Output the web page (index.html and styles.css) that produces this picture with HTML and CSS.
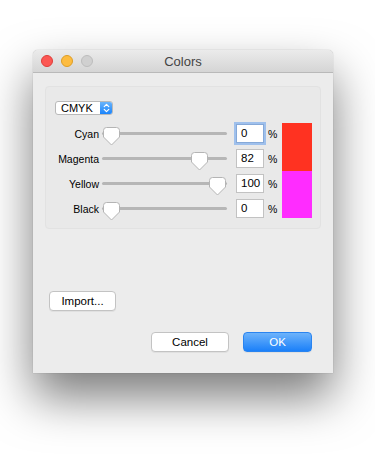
FILE: index.html
```html
<!DOCTYPE html>
<html>
<head>
<meta charset="utf-8">
<link rel="stylesheet" href="styles.css">
</head>
<body>
<div class="window">
  <div class="titlebar">
    <div class="lights">
      <span class="light red"></span>
      <span class="light yellow"></span>
      <span class="light gray"></span>
    </div>
    <div class="title">Colors</div>
  </div>
  <div class="content">
    <div class="group">
      <div class="popup">
        <span class="popup-label">CMYK</span>
        <span class="popup-arrows">
          <svg width="12" height="13" viewBox="0 0 12 13"><path d="M3.5 5 L6 2.5 L8.5 5 M3.5 8 L6 10.5 L8.5 8" fill="none" stroke="#fff" stroke-width="1.3" stroke-linecap="round" stroke-linejoin="round"/></svg>
        </span>
      </div>
      <div class="rows-wrap">
        <div class="rows">
          <div class="row">
            <span class="label">Cyan</span>
            <div class="slider"><div class="track"></div><span class="thumb" style="left:1px"><svg width="17" height="19" viewBox="0 0 17 19"><path d="M3.5 0.5 H13.5 Q16.5 0.5 16.5 3.5 V10 L8.5 18 L0.5 10 V3.5 Q0.5 0.5 3.5 0.5 Z" fill="#fff" stroke="#b4b4b4"/></svg></span></div>
            <span class="field focus">0</span>
            <span class="pct">%</span>
          </div>
          <div class="row">
            <span class="label">Magenta</span>
            <div class="slider"><div class="track"></div><span class="thumb" style="left:89px"><svg width="17" height="19" viewBox="0 0 17 19"><path d="M3.5 0.5 H13.5 Q16.5 0.5 16.5 3.5 V10 L8.5 18 L0.5 10 V3.5 Q0.5 0.5 3.5 0.5 Z" fill="#fff" stroke="#b4b4b4"/></svg></span></div>
            <span class="field">82</span>
            <span class="pct">%</span>
          </div>
          <div class="row">
            <span class="label">Yellow</span>
            <div class="slider"><div class="track"></div><span class="thumb" style="left:107px"><svg width="17" height="19" viewBox="0 0 17 19"><path d="M3.5 0.5 H13.5 Q16.5 0.5 16.5 3.5 V10 L8.5 18 L0.5 10 V3.5 Q0.5 0.5 3.5 0.5 Z" fill="#fff" stroke="#b4b4b4"/></svg></span></div>
            <span class="field">100</span>
            <span class="pct">%</span>
          </div>
          <div class="row">
            <span class="label">Black</span>
            <div class="slider"><div class="track"></div><span class="thumb" style="left:1px"><svg width="17" height="19" viewBox="0 0 17 19"><path d="M3.5 0.5 H13.5 Q16.5 0.5 16.5 3.5 V10 L8.5 18 L0.5 10 V3.5 Q0.5 0.5 3.5 0.5 Z" fill="#fff" stroke="#b4b4b4"/></svg></span></div>
            <span class="field">0</span>
            <span class="pct">%</span>
          </div>
        </div>
        <div class="swatch">
          <div class="sw-new"></div>
          <div class="sw-old"></div>
        </div>
      </div>
    </div>
    <button class="btn import">Import...</button>
    <div class="actions">
      <button class="btn">Cancel</button>
      <button class="btn primary">OK</button>
    </div>
  </div>
</div>
</body>
</html>
```

FILE: styles.css
```css
html, body {
  margin: 0;
  padding: 0;
  background: #ffffff;
}
body {
  width: 375px;
  height: 456px;
  overflow: hidden;
  font-family: "Liberation Sans", Arial, sans-serif;
  font-size: 10.5px;
  color: #000;
}
.window {
  margin: 50px 0 0 33px;
  width: 300px;
  height: 323px;
  background: #ececec;
  border-radius: 5px 5px 0 0;
  box-shadow: 0 24px 48px rgba(0,0,0,0.52), 0 0 1px rgba(0,0,0,0.4);
  display: flex;
  flex-direction: column;
}
.titlebar {
  height: 22px;
  border-bottom: 1px solid #b9b9b9;
  background: linear-gradient(#ebebeb, #d5d5d5);
  border-radius: 5px 5px 0 0;
  position: relative;
  display: flex;
  align-items: center;
  justify-content: center;
}
.lights {
  position: absolute;
  left: 8px;
  top: 5px;
  display: flex;
  gap: 8px;
}
.light {
  width: 12px;
  height: 12px;
  border-radius: 50%;
  box-sizing: border-box;
}
.red { background: #fc5753; border: 1px solid #df3d39; }
.yellow { background: #fdbc40; border: 1px solid #de9e25; }
.gray { background: #d0d0d0; border: 1px solid #bdbdbd; }
.title {
  font-size: 13px;
  color: #444;
  font-family: "Liberation Sans", Arial, sans-serif;
}
.content {
  flex: 1;
  padding: 13px 21px 0 12px;
  display: flex;
  flex-direction: column;
}
.group {
  height: 143px;
  box-sizing: border-box;
  border: 1px solid #e2e2e2;
  border-radius: 4px;
  background: #e9e9e9;
  margin-right: -9px;
  padding: 14px 0 0 9px;
}
.popup {
  width: 58px;
  height: 14px;
  box-sizing: border-box;
  border: 1px solid #b9b9b9;
  border-radius: 3px;
  background: #fff;
  display: flex;
  align-items: stretch;
  overflow: hidden;
}
.popup-label {
  flex: 1;
  padding-left: 5px;
  line-height: 12px;
  font-size: 11px;
}
.popup-arrows {
  width: 12px;
  background: linear-gradient(#6ab4fb, #1a84fb);
  display: flex;
  align-items: center;
  justify-content: center;
}
.popup-arrows svg { display: block; width: 11px; height: 12px; }
.rows-wrap {
  display: flex;
  margin-top: 6px;
}
.rows {
  display: flex;
  flex-direction: column;
}
.row {
  height: 25px;
  display: flex;
  align-items: center;
}
.label {
  width: 44px;
  text-align: right;
  margin-right: 3px;
}
.slider {
  width: 125px;
  height: 25px;
  position: relative;
}
.track {
  position: absolute;
  left: 0;
  right: 0;
  top: 11px;
  height: 3px;
  border-radius: 2px;
  background: #b6b6b6;
}
.thumb {
  position: absolute;
  top: 6px;
  width: 17px;
  height: 19px;
}
.thumb svg { display: block; }
.field {
  margin-left: 9px;
  width: 28px;
  height: 19px;
  box-sizing: border-box;
  border: 1px solid #c2c2c2;
  background: #fff;
  font-size: 11.5px;
  line-height: 17px;
  padding-left: 4px;
}
.field.focus {
  border-color: #86a9d8;
  box-shadow: 0 0 0 2px #9fc0ec;
}
.pct {
  margin-left: 4px;
  width: 10px;
  font-size: 10.5px;
}
.swatch {
  margin-left: 4px;
  margin-top: 2px;
  width: 30px;
  height: 95px;
  display: flex;
  flex-direction: column;
}
.sw-new { flex: 1; background: #ff3221; }
.sw-old { flex: 1; background: #ff2cff; }
.btn {
  font-family: "Liberation Sans", Arial, sans-serif;
  font-size: 11.5px;
  color: #000;
  background: #fff;
  border: 1px solid #c3c3c3;
  border-radius: 4px;
  height: 20px;
  padding: 0;
  box-shadow: 0 1px 0 rgba(0,0,0,0.05);
}
.import {
  align-self: flex-start;
  margin: 62px 0 0 4px;
  width: 67px;
}
.actions {
  display: flex;
  justify-content: flex-end;
  gap: 14px;
  margin-top: 21px;
}
.actions .btn { width: 78px; }
.actions .btn.primary {
  width: 69px;
  color: #fff;
  border-color: #2a84f0;
  background: linear-gradient(#6db3fb, #1b80f9);
}
```
